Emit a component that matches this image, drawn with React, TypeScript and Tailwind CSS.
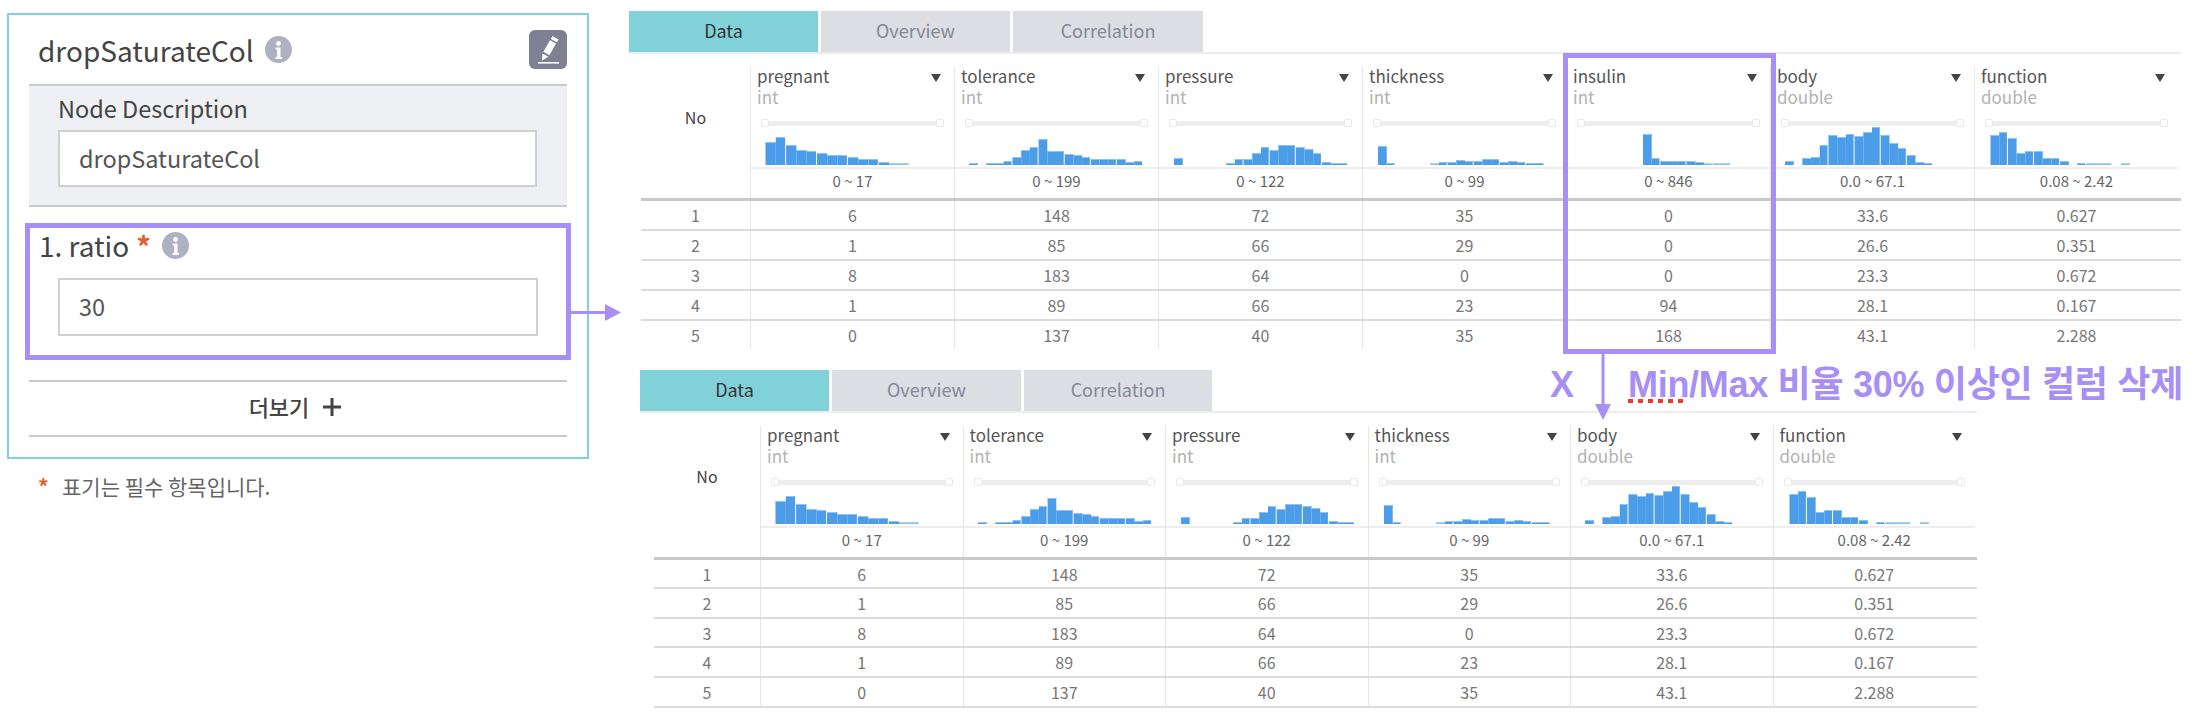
const SANS = "font-['Noto_Sans_CJK_KR','Noto_Sans',sans-serif]";

type Col = { name: string; type: string; range: string; start: number; w: number; bins: number[]; cells: string[] };

const COLS: Record<string, Col> = {
  pregnant: { name: "pregnant", type: "int", range: "0 ~ 17", start: 14.5, w: 10.3, bins: [23, 28, 20, 15, 14, 12, 10, 10, 8, 6, 6, 3, 1.5, 1.5], cells: ["6", "1", "8", "1", "0"] },
  tolerance: { name: "tolerance", type: "int", range: "0 ~ 199", start: 14, w: 8.7, bins: [2, 0, 2, 2, 4, 8, 15, 18, 26, 14, 14, 11, 10, 8, 6, 6, 6, 6, 3, 4], cells: ["148", "85", "183", "89", "137"] },
  pressure: { name: "pressure", type: "int", range: "0 ~ 122", start: 15, w: 8.7, bins: [7, 0, 0, 0, 0, 0, 2, 6, 6, 12, 18, 15, 20, 20, 18, 16, 12, 3, 2, 2], cells: ["72", "66", "64", "66", "40"] },
  thickness: { name: "thickness", type: "int", range: "0 ~ 99", start: 15, w: 8.7, bins: [19, 2, 0, 0, 0, 0, 1.5, 3, 3, 5, 4, 4, 6, 6, 3, 4, 3, 2, 2], cells: ["35", "29", "0", "23", "35"] },
  insulin: { name: "insulin", type: "int", range: "0 ~ 846", start: 76, w: 8.7, bins: [31, 7, 4, 4, 4, 4, 3, 1.5, 1.5, 1.5], cells: ["0", "0", "0", "94", "168"] },
  body: { name: "body", type: "double", range: "0.0 ~ 67.1", start: 14, w: 8.7, bins: [4, 0, 7, 8, 20, 30, 28, 31, 29, 33, 38, 30, 22, 17, 10, 3, 2], cells: ["33.6", "26.6", "23.3", "28.1", "43.1"] },
  func: { name: "function", type: "double", range: "0.08 ~ 2.42", start: 15.5, w: 8.7, bins: [30, 33, 27, 12, 14, 14, 7, 7, 4, 0, 2, 1.5, 1.5, 1.5, 0, 1.5], cells: ["0.627", "0.351", "0.672", "0.167", "2.288"] },
};

function InfoIcon({ className }: { className?: string }) {
  return (
    <svg viewBox="0 0 27 27" className={className}>
      <circle cx="13.5" cy="13.5" r="13.5" fill="#aeb1c1" />
      <circle cx="13.5" cy="7.5" r="2.4" fill="#fff" />
      <path d="M10.5 11.5h5v9.5h1.5v2h-6.5v-2h1.5v-7.5h-1.5z" fill="#fff" />
    </svg>
  );
}

function EditIcon() {
  return (
    <svg viewBox="0 0 38 39" className="w-[38px] h-[39px]">
      <rect width="38" height="39" rx="6" fill="#7d8192" />
      <path d="M23.5 6l6 3.4-1.6 2.9-6-3.4z" fill="#fff" />
      <path d="M21 10.2l6 3.4-6.6 11.6-6-3.4z" fill="#fff" />
      <path d="M13.4 23.4l6 3.3-6.4 3.9z" fill="#fff" />
      <rect x="9" y="32" width="21" height="1.6" fill="#fff" />
    </svg>
  );
}

function Histogram({ c }: { c: Col }) {
  return (
    <svg width="100%" height="38" className="block">
      {c.bins.map((h, i) => {
        const width = i % 3 === 1 ? c.w - 1 : c.w;
        return h > 0 ? (
          <g key={i}>
            <rect x={c.start + i * c.w} y={38 - h} width={width} height={h} fill={h < 2 ? "#86bdf1" : "#4b9ce9"} />
            <rect x={c.start + i * c.w} y={38 - h} width={width} height={1} fill="#8fc3f3" />
          </g>
        ) : null;
      })}
    </svg>
  );
}

function HeaderCell({ c }: { c: Col }) {
  return (
    <div className="flex flex-col h-[131px] border-l border-[#e6e6e6]">
      <div className="flex items-center justify-between h-[21px] pl-[6px] pr-[13px]">
        <span className="text-[17px] leading-[22px] text-[#555] mb-[3px]">{c.name}</span>
        <svg viewBox="0 0 10 8" className="w-[10px] h-[8px]">
          <path d="M0 0h10l-5 8z" fill="#444" />
        </svg>
      </div>
      <div className="h-[20px] pl-[6px] text-[17px] leading-[18px] text-[#b2b2b2]">{c.type}</div>
      <div className="mt-[11px] h-[8px] mx-[10px] relative flex items-center">
        <div className="h-[5px] w-full bg-[#eee]" />
        <div className="absolute left-0 top-0 w-[8px] h-[8px] bg-white border border-[#e8e8e8] rounded-[2px]" />
        <div className="absolute right-0 top-0 w-[8px] h-[8px] bg-white border border-[#e8e8e8] rounded-[2px]" />
      </div>
      <Histogram c={c} />
      <div className="mt-[2px] h-[2px] bg-[#eee]" />
      <div className="flex-1 pb-[4px] flex items-center justify-center text-[15px] text-[#666]">{c.range}</div>
    </div>
  );
}

function DataTable({
  cols,
  grid,
  tableClass,
  rowHeights,
  bottomLine,
  tabsClass,
  lineClass,
}: {
  cols: Col[];
  grid: string;
  tableClass: string;
  rowHeights: string[];
  bottomLine: boolean;
  tabsClass: string;
  lineClass: string;
}) {
  return (
    <div>
      <div className={`flex gap-[3px] border-b-2 border-[#ededed] ${lineClass}`}>
        <div className="w-[189px] h-[41px] pb-[2px] flex items-center justify-center bg-[#81d1d9] text-[18px] text-[#333]">Data</div>
        <div className="w-[189px] h-[41px] pb-[2px] flex items-center justify-center bg-[#dddee3] text-[18px] text-[#838797]">Overview</div>
        <div className={`h-[41px] pb-[2px] flex items-center justify-center bg-[#dddee3] text-[18px] text-[#838797] ${tabsClass}`}>Correlation</div>
      </div>
      <div className={`mt-[13px] ${tableClass}`}>
        <div className={`grid ${grid} border-b-[3px] border-[#c9c9c9]`}>
          <div className="h-[131px] pt-[35px] text-center text-[16px] leading-[30px] text-[#444]">No</div>
          {cols.map((c) => (
            <HeaderCell key={c.name} c={c} />
          ))}
        </div>
        {rowHeights.map((h, r) => (
          <div
            key={r}
            className={`grid ${grid} ${h} ${r < rowHeights.length - 1 || bottomLine ? "border-b-2 border-[#dcdcdc]" : ""}`}
          >
            <div className="flex items-center justify-center text-[16px] text-[#777]">{r + 1}</div>
            {cols.map((c) => (
              <div key={c.name} className="flex items-center justify-center border-l border-[#e6e6e6] text-[16px] text-[#777]">
                {c.cells[r]}
              </div>
            ))}
          </div>
        ))}
      </div>
    </div>
  );
}

function LeftPanel() {
  return (
    <div className="w-[582px] ml-[7px] mt-[13px]">
      <div className="border-2 border-[#81d1d9] h-[446px] px-[20px]">
        <div className="h-[69px] flex items-center justify-between pl-[9px] pr-0">
          <div className="flex items-center gap-[11px]">
            <span className="text-[28px] leading-[34px] text-[#444]">dropSaturateCol</span>
            <InfoIcon className="w-[27px] h-[27px]" />
          </div>
          <EditIcon />
        </div>
        <div className="border-y-2 border-[#c9cacd] bg-[#eff0f4] h-[123px] pl-[29px] pr-[30px] pt-[7px]">
          <div className="text-[23.5px] leading-[30px] text-[#444]">Node Description</div>
          <div className="mt-[7px] h-[57px] border-2 border-[#d0d0d0] bg-white flex items-center pl-[19px] text-[23.5px] text-[#555]">dropSaturateCol</div>
        </div>
        <div className="mt-[16px] -mx-[4px] h-[137px] border-[5px] border-[#a78ff5]">
          <div className="flex items-center h-[34px] pl-[9px]">
            <span className="text-[28px] leading-[34px] text-[#444]">1. ratio</span>
            <span className="ml-[7px] text-[29px] leading-[26px] text-[#e0622c] font-bold">*</span>
            <InfoIcon className="ml-[11px] w-[27px] h-[27px]" />
          </div>
          <div className="ml-[28px] mr-[28px] mt-[16px] h-[58px] border-2 border-[#d0d0d0] bg-white flex items-center pl-[19px] text-[23.5px] text-[#555]">30</div>
        </div>
        <div className="mt-[20px] border-y-2 border-[#c9cacd] h-[57px] pr-[6px] pb-[3px] flex items-center justify-center gap-[14px] text-[22px] font-medium text-[#444]">
          <span className="pb-[2px]">더보기</span>
          <svg viewBox="0 0 18 18" className="w-[18px] h-[18px]">
            <path d="M7.5 0h3v7.5H18v3h-7.5V18h-3v-7.5H0v-3h7.5z" fill="#444" />
          </svg>
        </div>
      </div>
      <div className="mt-[13px] ml-[31px] flex items-center text-[21px] leading-[28px] text-[#666]">
        <span className="w-[24px] text-[#e0622c] font-bold">*</span>
        <span>표기는 필수 항목입니다.</span>
      </div>
    </div>
  );
}

export default function App() {
  const c = COLS;
  return (
    <div className={`relative w-[2208px] h-[722px] overflow-hidden bg-white flex ${SANS}`}>
      <LeftPanel />
      <div className="ml-[40px] flex flex-col">
        <div className="mt-[11px]">
          <DataTable
            cols={[c.pregnant, c.tolerance, c.pressure, c.thickness, c.insulin, c.body, c.func]}
            grid="grid-cols-[109px_repeat(7,204px)_3px]"
            tableClass="ml-[12px] w-[1540px]"
            rowHeights={["h-[30px]", "h-[30px]", "h-[30px]", "h-[30px]", "h-[27px]"]}
            bottomLine={false}
            tabsClass="w-[190px]"
            lineClass="w-[1552px]"
          />
        </div>
        <div className="mt-[22px] ml-[11px]">
          <DataTable
            cols={[c.pregnant, c.tolerance, c.pressure, c.thickness, c.body, c.func]}
            grid="grid-cols-[106px_repeat(6,202.5px)_2px]"
            tableClass="ml-[14px] w-[1323px]"
            rowHeights={["h-[29px]", "h-[30px]", "h-[29px]", "h-[30px]", "h-[30px]"]}
            bottomLine={true}
            tabsClass="w-[188px]"
            lineClass="w-[1337px]"
          />
        </div>
      </div>

      {/* Annotations over the content */}
      <svg className="absolute left-[571px] top-[304px]" width="50" height="17">
        <rect x="0" y="7" width="36" height="3" fill="#a78ff5" />
        <path d="M34 0l16 8.5L34 17z" fill="#a78ff5" />
      </svg>
      <div className="absolute left-[1563px] top-[53px] w-[213px] h-[301px] border-[5px] border-[#a78ff5]" />
      <svg className="absolute left-[1594px] top-[354px]" width="18" height="66">
        <rect x="7.5" y="0" width="3" height="52" fill="#a78ff5" />
        <path d="M1 50h16l-8 16z" fill="#a78ff5" />
      </svg>
      <div className="absolute left-[1550px] top-[363px] text-[36px] leading-[44px] font-bold text-[#a78ff5] font-['Liberation_Sans','Noto_Sans_CJK_KR',sans-serif]">X</div>
      <div className="absolute left-[1628px] top-[363px] whitespace-nowrap text-[36px] tracking-[-0.3px] leading-[44px] font-bold text-[#a78ff5] font-['Liberation_Sans','Noto_Sans_CJK_KR',sans-serif]">
        Min/Max 비율 30% 이상인 컬럼 삭제
      </div>
      <div className="absolute left-[1628px] top-[399px] flex gap-[5px]">
        {[0, 1, 2, 3, 4, 5].map((i) => (
          <div key={i} className="w-[5px] h-[4px] bg-[#e53e30]" />
        ))}
      </div>
    </div>
  );
}
